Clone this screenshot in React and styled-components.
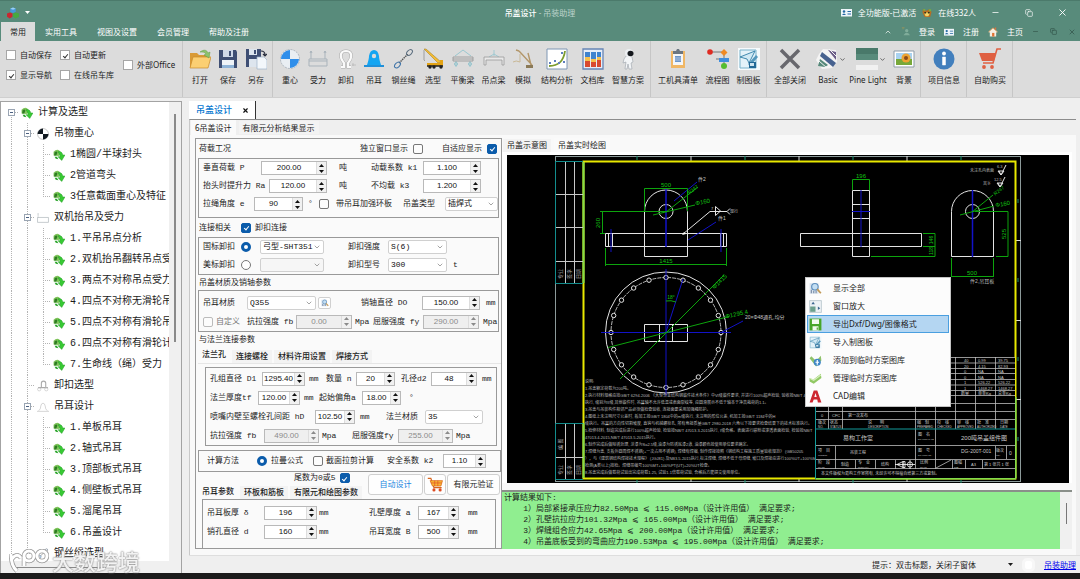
import styled, { createGlobalStyle, css } from "styled-components";
import { ChevronDown, ChevronUp, Copy, Minus, X } from "lucide-react";

const GlobalStyle = createGlobalStyle`
  *, *::before, *::after {
    box-sizing: border-box;
  }

  body {
    margin: 0;
    font-family: "Noto Sans", "Noto Sans CJK SC", sans-serif;
    font-size: 8px;
    line-height: 12px;
    color: #1c1c1c;
    background: #efefef;
  }

  button, input, select {
    margin: 0;
    padding: 0;
    font: inherit;
    color: inherit;
  }

  button {
    border: 0;
    background: none;
  }

  svg {
    display: block;
    flex: none;
  }
`;

/* ---------- window ---------- */

const Window = styled.div`
  display: flex;
  flex-direction: column;
  height: 100vh;
  overflow: hidden;
  border-bottom: 6px solid #1b1b1b;
`;

const TitleBar = styled.header`
  display: grid;
  grid-template-columns: 1fr auto 1fr;
  align-items: center;
  height: 22px;
  padding-top: 2px;
  color: #fff;
  background: #588b7b;
  border-top: 1px solid #4b7a6b;
`;

const TitleLeft = styled.div`
  display: flex;
  align-items: center;
  gap: 6px;
  padding-left: 7px;
`;

const Title = styled.h1`
  margin: 0;
  font-size: 8px;
  font-weight: 500;

  span {
    font-weight: 400;
    color: #bcd3cb;
  }
`;

const TitleRight = styled.div`
  display: flex;
  justify-content: flex-end;
  align-items: center;
  gap: 6px;
`;

const WindowButtons = styled.div`
  display: flex;
  justify-content: space-between;
  align-items: center;
  width: ${(props) => (props.$small ? "48px" : "98px")};
  padding: ${(props) => (props.$small ? "0 4px 0 0" : "0 12px 0 9px")};
  color: ${(props) => (props.$small ? "#2f4f45" : "#fff")};

  button {
    display: grid;
    place-items: center;
  }
`;

const MenuBar = styled.nav`
  display: flex;
  align-items: stretch;
  height: 19px;
  padding-left: 1px;
  color: #fff;
  background: #588b7b;
`;

const MenuTab = styled.button`
  padding: 0 ${(props) => (props.$active ? "9px" : "10px")};
  color: ${(props) => (props.$active ? "#1c1c1c" : "#fff")};
  background: ${(props) => (props.$active ? "#dcdcdc" : "none")};
`;

const MenuRight = styled.div`
  display: flex;
  align-items: center;
  gap: 9px;
  margin-left: auto;
`;

/* ---------- ribbon ---------- */

const Ribbon = styled.div`
  display: flex;
  height: 57px;
  background: #dcdcdc;
  border-bottom: 1px solid #cfcfcf;
`;

const RibbonOptions = styled.div`
  display: grid;
  grid-template-columns: 54px 63px 1fr;
  grid-template-rows: 20px 20px;
  align-content: start;
  align-items: center;
  width: 183px;
  padding: 4px 0 0 6px;
  border-right: 1px solid #c6c6c6;

  label:last-child {
    grid-column: 3;
    grid-row: 1 / 3;
  }
`;

const RibbonGroup = styled.div`
  display: flex;
  padding: 0 2px 0 3px;
  border-right: 1px solid #c6c6c6;
`;

const toolWidths = { s: "28px", m: "31px", p: "36px", l: "40px", w: "44px", x: "48px" };

const Tool = styled.button`
  display: flex;
  flex-direction: column;
  align-items: center;
  gap: 4px;
  width: ${(props) => toolWidths[props.$size]};
  padding-top: 7px;
  white-space: nowrap;
`;

const ToolIcon = styled.span`
  display: flex;
  align-items: center;
  gap: 1px;
  height: 22px;
  margin-left: ${(props) => (props.$arrow ? "6px" : "0")};
`;

/* ---------- controls ---------- */

const CheckLabel = styled.label`
  display: flex;
  align-items: center;
  gap: ${(props) => props.$gap || "4px"};
  white-space: nowrap;
  color: ${(props) => (props.$muted ? "#777" : "inherit")};
`;

const Check = styled.input.attrs({ type: "checkbox" })`
  appearance: none;
  display: grid;
  place-items: center;
  flex: none;
  width: 10px;
  height: 10px;
  border: 1px solid #777;
  border-radius: 2px;
  background: #fcfcfc;

  &:checked {
    border-color: #0b5cab;
    background: #0b5cab;
  }

  &:checked::before {
    content: "";
    width: 3px;
    height: 5px;
    border: solid #fff;
    border-width: 0 1px 1px 0;
    transform: rotate(40deg);
  }

  &:disabled {
    border-color: #bbb;
  }

  ${(props) =>
    props.$flat &&
    css`
      border-color: #a6a6a6;
      border-radius: 0;
      background: #fff;

      &:checked {
        border-color: #a6a6a6;
        background: #fff;
      }

      &:checked::before {
        border-color: #333;
      }
    `}
`;

const Radio = styled.input.attrs({ type: "radio" })`
  appearance: none;
  width: 10px;
  height: 10px;
  border: 1px solid #777;
  border-radius: 50%;
  background: #fff;

  &:checked {
    border: 3px solid #0b5cab;
  }
`;

const SpinWrapper = styled.span`
  display: flex;
  width: ${(props) => props.$width}px;
  height: 14px;
  border: 1px solid #b9b9b9;
  background: ${(props) => (props.$disabled ? "#efefef" : "#fff")};
  color: ${(props) => (props.$disabled ? "#8b8b8b" : "#111")};
`;

const SpinInput = styled.input`
  flex: 1;
  min-width: 0;
  border: 0;
  outline: 0;
  background: none;
  font-family: "Liberation Sans", sans-serif;
  font-size: 8px;
  text-align: center;
`;

const SpinArrows = styled.span`
  display: grid;
  grid-template-rows: 1fr 1fr;
  width: 10px;
  background: #f1f1f1;
  border-left: 1px solid #ddd;

  button {
    display: grid;
    place-items: center;
    line-height: 0;
  }
`;

const SelectWrapper = styled.span`
  display: grid;
  grid-template-columns: 1fr 10px;
  align-items: center;
  width: ${(props) => props.$width}px;
  height: 14px;
  border: 1px solid #d0d0d0;
  border-radius: 2px;
  background: ${(props) => (props.$disabled ? "#f6f6f6" : "#fff")};
  color: #111;

  select {
    grid-area: 1 / 1 / 2 / 3;
    width: 100%;
    height: 12px;
    padding-left: 2px;
    border: 0;
    outline: 0;
    appearance: none;
    background: none;
    line-height: 12px;
  }

  svg {
    grid-area: 1 / 2;
    color: #777;
    pointer-events: none;
  }
`;

/* ---------- body ---------- */

const Body = styled.div`
  display: flex;
  flex: 1;
  min-height: 0;
  padding-top: 3px;
`;

const Sidebar = styled.aside`
  display: grid;
  grid-template-columns: 1fr 12px;
  grid-template-rows: minmax(0, 1fr) 12px;
  flex: none;
  width: 182px;
  border: 1px solid #a3a3a3;
  border-bottom: 0;
  background: #f0f0f0;
`;

const Tree = styled.ul`
  margin: 0;
  padding: 0 0 0 2px;
  overflow: hidden;
  list-style: none;
  background: #fff;
  font-family: "Liberation Mono", "Noto Sans CJK SC", monospace;
  font-size: 10px;
`;

const TreeRow = styled.li`
  display: flex;
  align-items: center;
  height: 21px;
  white-space: nowrap;
`;

const dots = "#b4b4b4 0 1px, transparent 1px 2px";

const Branch = styled.span`
  display: grid;
  place-items: center;
  flex: none;
  width: 16px;
  height: 21px;
  background-repeat: no-repeat;
  background-image: repeating-linear-gradient(${dots}),
    repeating-linear-gradient(90deg, ${dots});
  background-position: 8px ${(props) => (props.$from ? "11px" : "0")}, 8px 10px;
  background-size: 1px ${(props) => (props.$last || props.$from ? "11px" : "100%")},
    ${(props) => (props.$stub ? "8px 1px" : "0 0")};
`;

const Expander = styled.button`
  width: 7px;
  height: 7px;
  border: 1px solid #9aa5b3;
  background: linear-gradient(#4a5f80, #4a5f80) center / 3px 1px no-repeat #fff;
`;

const TreeIcon = styled.span`
  display: grid;
  place-items: center;
  flex: none;
  width: 16px;
  margin-right: 3px;
`;

const Scroll = styled.div`
  display: flex;
  justify-content: center;
  padding: 12px 0;

  &::before {
    content: "";
    width: 2px;
    height: 228px;
    max-height: 100%;
    background: #8a8a8a;
  }
`;

const HScroll = styled.div`
  display: flex;
  align-items: center;
  padding-left: 13px;

  &::before {
    content: "";
    width: 92px;
    height: 1px;
    background: #8a8a8a;
  }
`;

const Main = styled.main`
  display: flex;
  flex-direction: column;
  flex: 1;
  min-width: 0;
  padding-left: 7px;
`;

const DocTabs = styled.div`
  display: flex;
  height: 18px;
`;

const DocTab = styled.div`
  display: flex;
  align-items: center;
  gap: 10px;
  padding: 0 6px 0 7px;
  border-right: 1px solid #333;
  background: #fff;
  color: #0a78d0;
  font-size: 9px;
  font-weight: 500;

  button {
    color: #111;
  }
`;

const Panel = styled.section`
  display: flex;
  flex-direction: column;
  flex: 1;
  min-height: 0;
  margin-right: 4px;
  border-top: 1px solid #8c8c8c;
  border-left: 1px solid #c9c9c9;
  background: #f9f9f9;
`;

const SubTabs = styled.div`
  display: flex;
  align-items: center;
  gap: 3px;
  height: 15px;
  padding-left: 1px;
  background: #efefef;
`;

const SubTab = styled.button`
  height: ${(props) => (props.$active ? "100%" : "13px")};
  padding: 0 4px;
  background: ${(props) => (props.$active ? "#fafafa" : "#f3f3f3")};
  white-space: nowrap;
  font-weight: ${(props) => (props.$bold ? "500" : "400")};
`;

const Work = styled.div`
  display: flex;
  flex: 1;
  min-height: 0;
  padding: 3px 4px 6px 5px;
`;

/* ---------- form ---------- */

const Form = styled.form`
  flex: none;
  width: 307px;
  padding-left: 2px;
  overflow: hidden;
  border: 1px solid #999;
  background: #fafafa;
  font-family: "Liberation Mono", "Noto Sans CJK SC", monospace;
`;

const Legend = styled.div`
  display: flex;
  align-items: center;
  gap: ${(props) => props.$gap || "10px"};
  height: ${(props) => (props.$short ? "15px" : "19px")};
  padding: 0 4px 0 1px;
`;

const Spacer = styled.span`
  flex: 1;
`;

const Group = styled.div`
  margin: ${(props) => props.$margin || "0 2px 0 0"};
  padding: ${(props) => props.$pad || "0"};
  border: 1px solid #999;
`;

const Row = styled.div`
  display: grid;
  grid-template-columns: ${(props) => props.$cols};
  align-items: center;
  justify-items: start;
  height: ${(props) => props.$height || "19px"};
  padding-left: 4px;
  white-space: nowrap;
`;

const FormTabs = styled.div`
  display: flex;
  align-items: flex-end;
  gap: 2px;
  height: 16px;
`;

const TabPage = styled.div`
  padding: 3px 4px 4px 7px;
  border-top: 1px solid #e6e6e6;
`;

const ActionBar = styled.div`
  display: flex;
  align-items: flex-start;
  height: 27px;
`;

const ActionTabs = styled.div`
  display: flex;
  flex-direction: column;
  flex: 1;
  justify-content: flex-end;
  height: 27px;
`;

const ActionButton = styled.button`
  display: grid;
  place-items: center;
  height: 21px;
  width: ${(props) => props.$width}px;
  margin: 2px 1px 0 0;
  border: 1px solid #d0d0d0;
  border-radius: 3px;
  background: #fefefe;
  color: ${(props) => (props.$primary ? "#1b86e0" : "#1c1c1c")};
`;

const SearchButton = styled.button`
  display: grid;
  place-items: center;
  width: 13px;
  height: 12px;
  border: 1px solid #d0d0d0;
  border-radius: 2px;
  background: #fff;
`;

/* ---------- viewer ---------- */

const Viewer = styled.div`
  display: flex;
  flex-direction: column;
  flex: 1;
  min-width: 0;
`;

const ViewerTabs = styled(SubTabs)`
  height: 14px;
  background: none;
`;

const CanvasFrame = styled.div`
  position: relative;
  flex: 1;
  min-height: 0;
  padding: 3px 3px 0 5px;
  background: #fff;
`;

const CadSvg = styled.svg`
  width: 100%;
  height: 100%;
  background: #000;
  font-family: "Liberation Sans", "Noto Sans CJK SC", sans-serif;
`;

const ContextMenu = styled.ul`
  position: absolute;
  left: 303px;
  top: 125px;
  width: 146px;
  margin: 0;
  padding: 1px;
  list-style: none;
  border: 1px solid #c4c4c4;
  background: #fcfcfc;
`;

const MenuItem = styled.button`
  display: grid;
  grid-template-columns: 24px 1fr;
  align-items: center;
  width: 100%;
  height: 18px;
  padding-left: 1px;
  text-align: left;
  border: 1px solid ${(props) => (props.$active ? "#4a9fe0" : "transparent")};
  background: ${(props) => (props.$active ? "#b4d6f2" : "none")};
`;

const Results = styled.div`
  display: flex;
  height: 59px;
  margin-top: 7px;
  border-top: 2px solid #8a8f8a;
  background: #90ee90;
`;

const ResultText = styled.pre`
  flex: 1;
  margin: 0;
  padding-left: 2px;
  overflow: hidden;
  font-family: "Liberation Mono", "Noto Sans CJK SC", monospace;
  font-size: 8px;
  line-height: 11px;
`;

const ResultScroll = styled.div`
  display: flex;
  justify-content: center;
  width: 12px;
  padding-top: 11px;
  background: #f0f0f0;

  &::before {
    content: "";
    width: 1px;
    height: 21px;
    background: #777;
  }
`;

const StatusBar = styled.footer`
  display: flex;
  justify-content: flex-end;
  align-items: center;
  height: 18px;
  padding-right: 4px;
  border-top: 1px solid #dedede;

  span {
    margin-right: 32px;
  }

  a {
    margin-left: 9px;
    color: #0000ee;
  }
`;

const StatusIcon = styled.i`
  width: 13px;
  height: 14px;
  margin-left: 9px;
  border: 3px solid #f7f7f7;
  border-radius: 5px;
  background: #fff;
`;

const Watermark = styled.div`
  position: fixed;
  left: 9px;
  bottom: 6px;
  display: flex;
  align-items: center;
  gap: 3px;
  color: rgba(255, 255, 255, 0.9);
  font-size: 22px;
  font-weight: 500;
  line-height: 24px;
  text-shadow: 0 0 2px #777, 0 0 1px #999;
  pointer-events: none;
`;

/* ---------- icons ---------- */

const Svg = ({ size = 22, children, ...rest }) => (
  <svg width={size} height={size} viewBox="0 0 22 22" fill="none" {...rest}>
    {children}
  </svg>
);

const icons = {
  open: (
    <>
      <path d="M1 5h7l2 2h9v12H1z" fill="#d99a36" />
      <path d="M4 9h18l-3 11H1z" fill="#fbcf72" stroke="#c98a2a" strokeWidth=".7" />
      <path d="M11 4c4-3 7-2 8 1l2-1-1 6-5-3 2-1c-1-2-3-2-6-2z" fill="#8cc26b" stroke="#5f9a45" strokeWidth=".5" />
    </>
  ),
  save: (
    <>
      <path d="M2 2h17l1 2v16H2z" fill="#3f4f74" />
      <path d="M6 2h10v7H6z" fill="#cfd9e8" />
      <path d="M12 3h2v5h-2z" fill="#3f4f74" />
      <path d="M5 12h12v8H5z" fill="#eef3f8" />
      <path d="M5 17h12v3H5z" fill="#8fb4d8" />
    </>
  ),
  saveAs: (
    <>
      <path d="M1 1h15v18H1z" fill="#3f4f74" />
      <path d="M4 1h8v6H4zM4 11h9v8H4z" fill="#dde5ee" />
      <path d="M9 2h2v4H9z" fill="#3f4f74" />
      <path d="M16 3q4 0 4 4m-2-1 2 2 2-2" stroke="#2a2f3f" strokeWidth="1.2" />
      <path d="M12 9h7l3 3v9H12z" fill="#f3f7fb" stroke="#9fb2c9" strokeWidth=".7" />
    </>
  ),
  gravity: (
    <>
      <circle cx="11" cy="11" r="9.5" fill="#e9eef3" stroke="#8d99a6" strokeWidth=".6" strokeDasharray="2 1" />
      <path d="M11 11V2a9 9 0 0 0-9 9zM11 11v9a9 9 0 0 0 9-9z" fill="#2f8eea" />
    </>
  ),
  force: (
    <path d="M2 11h18v7H2zM4 11V3M18 11V3m-14 0-1 2m1-2 1 2m13-2-1 2m1-2 1 2M2 13h18" stroke="#a9b3bb" strokeWidth="1" />
  ),
  shackle: (
    <>
      <path d="M6 19h3v-4Q5 10 6 6q1-3 5-3t5 3q1 4-3 9v4h3" stroke="#a8a8a8" strokeWidth="3.200" />
      <path d="M6 19h3v-4Q5 10 6 6q1-3 5-3t5 3q1 4-3 9v4h3" stroke="#fafafa" strokeWidth="2.200" />
      <path d="M17 17h4M18 15v3" stroke="#b0b0b0" strokeWidth=".6" />
    </>
  ),
  lug: (
    <>
      <path d="M1 17h3Q6 11 6 8q1-6 5-6t5 6q0 3 2 9h3v2H1z" fill="#14a5f2" />
      <circle cx="11" cy="8" r="2.2" fill="#dcdcdc" />
      <path d="M1 18h20" stroke="#2c7cc0" />
    </>
  ),
  rope: (
    <>
      <path d="m6 15 9-9" stroke="#555" strokeWidth="1.4" strokeDasharray="1.5 .7" />
      <ellipse cx="16.500" cy="4.500" rx="3.500" ry="2.200" transform="rotate(-45 16.500 4.500)" stroke="#5d6f80" />
      <ellipse cx="4.500" cy="17" rx="3.500" ry="2.200" transform="rotate(-45 4.500 17)" stroke="#3d73a8" />
    </>
  ),
  crane: (
    <>
      <path d="M2 1 16 15l3-1L4 1z" fill="#f5bd33" stroke="#9a7418" strokeWidth=".5" />
      <path d="M2 2v10l1 1" stroke="#777" strokeWidth=".6" />
      <path d="M5 15h13v-3h3v6H5z" fill="#e3a314" />
      <path d="M5 18h16" stroke="#222" strokeWidth="1.5" />
      <circle cx="8" cy="19" r="1.700" fill="#222" />
      <circle cx="12" cy="19" r="1.700" fill="#222" />
      <circle cx="19" cy="19" r="1.700" fill="#222" />
    </>
  ),
  balance: (
    <>
      <path d="M3 8 11 2l8 6M4 13v6M18 13v6" stroke="#92c4cd" strokeWidth=".9" />
      <path d="M1 9h20v4H1zM1 11h20" stroke="#999" strokeWidth=".9" />
      <circle cx="4" cy="16" r="1.500" stroke="#92c4cd" />
      <circle cx="18" cy="16" r="1.500" stroke="#92c4cd" />
    </>
  ),
  beam: (
    <>
      <path d="M11 8V2M6 9l5-3 5 3" stroke="#9ac7d0" strokeWidth=".9" />
      <path d="M1 9h20v8h-2v-5H3v5H1z" fill="#e8e8e8" stroke="#999" strokeWidth=".8" />
    </>
  ),
  simulate: (
    <>
      <path d="M7 3 20 17M16 5l3 12M7 3 4 2" stroke="#b2966a" strokeWidth="1.4" />
      <path d="M14 17h7v3h-7z" fill="#8b7a58" />
      <path d="M1 14q3-2 7 0M8 6v8" stroke="#c9b896" />
    </>
  ),
  chart: (
    <>
      <path d="M1 1h20v20H1z" fill="#fff" stroke="#7f97b5" />
      <path d="M3 18q14 0 16-15" stroke="#7c9c2e" strokeWidth="1.800" />
      <path d="M3 14h2v2H3zM8 12h2v2H8zM12 14h2v2h-2zM15 4h2v2h-2zM17 13h2v2h-2z" fill="#5e7ebf" />
    </>
  ),
  docs: (
    <>
      <path d="M1 1h20v20H1z" fill="#e6edf8" stroke="#6685b5" strokeWidth="1.300" />
      <path d="M3 4h5v7H3zM9 4h5v7H9zM15 4h4v7h-4z" fill="#3f83cf" />
      <path d="M3 9h5v5H3zM9 11h5v4H9zM15 9h4v5h-4z" fill="#f6c04d" />
      <path d="M3 13h5v6H3zM9 14h5v5H9zM15 12h4v7h-4z" fill="#d84a30" />
    </>
  ),
  robot: (
    <>
      <path d="M9 8q4-2 6 1l1 5-2 1 1 6h-3l-1-5-1 5H8l1-7-3 1 1-4z" fill="#f3f5f7" stroke="#9aa1aa" strokeWidth=".6" />
      <circle cx="12" cy="5" r="4" fill="#eceff2" />
      <ellipse cx="13.500" cy="5.500" rx="3" ry="2.800" fill="#15181d" />
    </>
  ),
  clipboard: (
    <>
      <path d="M4 3h14v17H4z" fill="#f0b765" />
      <path d="M6 5h10v12H6z" fill="#f4f6f8" />
      <path d="M6 3h3l1-2h2l1 2h3v3H6z" fill="#6b7681" />
      <path d="M8 8h6v6H8z" fill="#6d96c8" />
      <path d="M8 10h6M8 12h6" stroke="#c9d9ec" strokeWidth=".7" />
    </>
  ),
  flow: (
    <>
      <path d="M5 4h12v15M17 11H9" stroke="#777" />
      <circle cx="3" cy="4" r="2.800" fill="#df2b22" />
      <path d="m17 1 3.500 3.500L17 8l-3.500-3.500z" fill="#f08a24" />
      <path d="M12 10h10v4H12z" fill="#3e8ede" />
      <circle cx="17" cy="18" r="3" fill="#54bd31" />
    </>
  ),
  board: (
    <>
      <path d="M0 0h22v22H0z" fill="#f6fafc" />
      <path d="M2 2h16v18H2z" fill="#e4f2f9" stroke="#79b2cb" />
      <path d="m2 9 15-6-6 12-2-4z" fill="#d0e9f5" stroke="#317ea6" strokeWidth=".9" />
      <path d="m10 16 8-9 2 2-8 9z" fill="#5698bc" />
      <path d="M11 14h7v6h-7z" fill="#246996" />
      <path d="M12 15h4v3h-4z" fill="#cfe5f0" />
    </>
  ),
  closeAll: <path d="m2 2 18 18M20 2 2 20" stroke="#67676d" strokeWidth="3.500" />,
  basic: (
    <>
      <path d="m0 12 3-6 4-5 13 1 1 12-5 6-10 1z" fill="#f4f4f4" />
      <path d="m6 4 14 11-3 4L4 8z" fill="#47628f" />
      <path d="m12 2 8 2v8z" fill="#695b86" />
      <path d="m2 18 2-7 8 6-3 2z" fill="#56897a" />
      <path d="m3 13 8 7M13 1l8 8" stroke="#f4f4f4" />
    </>
  ),
  pine: (
    <>
      <path d="M0 0h22v6H0z" fill="#49796a" />
      <path d="M0 6h22v6H0z" fill="#588b7b" />
      <path d="M0 12h22v5H0z" fill="#dcdcdc" />
      <path d="M0 17h22v5H0z" fill="#f1f1f1" />
    </>
  ),
  photo: (
    <>
      <path d="M1 3h20v16H1z" fill="#fff" stroke="#8d9ca8" />
      <path d="M3 5h16v6H3z" fill="#a8d2f0" />
      <path d="M3 11h16v6H3z" fill="#77a83a" />
      <circle cx="13" cy="10" r="4.500" fill="#eda331" />
      <circle cx="13" cy="10" r="2" fill="#8a4a17" />
    </>
  ),
  info: (
    <>
      <circle cx="11" cy="11" r="10.500" fill="#427fbd" />
      <circle cx="11" cy="5.500" r="1.900" fill="#fff" />
      <path d="M9.500 9h3v8h-3z" fill="#fff" stroke="#fff" strokeWidth=".5" />
    </>
  ),
  cart: (
    <>
      <path d="M22 1h-4l-4 14H4" stroke="#df6042" strokeWidth="1.600" />
      <path d="M0 5h17l-2 8H3z" fill="#df6042" />
      <circle cx="5" cy="19" r="1.900" fill="#df6042" />
      <circle cx="13" cy="19" r="1.900" fill="#df6042" />
    </>
  ),
  goldCart: (
    <>
      <path d="M1 3h4l4 12h10" stroke="#d8631b" strokeWidth="1.500" />
      <path d="M4 6h16l-2 7H7z" fill="#f8b834" stroke="#db6b1b" />
      <path d="M10 6v7m4-7v7M5 9h14" stroke="#e2572a" />
      <circle cx="9" cy="18" r="2" fill="#dd4c22" />
      <circle cx="17" cy="18" r="2" fill="#dd4c22" />
    </>
  ),
  cubes: (
    <>
      <path d="m11 1 5 2v6l-5 2-5-2V3z" fill="#4698de" />
      <path d="m5 10 5 2v6l-5 3-5-3v-6z" fill="#c72830" />
      <path d="m16 10 6 2v6l-6 3-5-3v-6z" fill="#46a942" />
      <path d="m6 3 5 2 5-2-5-2z" fill="#9bd0f2" />
    </>
  ),
  card: (
    <>
      <path d="M0 4h22v15H0z" fill="#eef5fa" />
      <circle cx="6" cy="9" r="2.500" fill="#2468a3" />
      <path d="M2 16q4-6 8 0zM13 8h7v2h-7zM13 13h7v2h-7z" fill="#2468a3" />
    </>
  ),
  lion: (
    <>
      <path d="m2 2 7 4 8-4 4 7-3 11H6L1 10z" fill="#b76c22" />
      <path d="M4 10h14l-4 8H8z" fill="#f2d466" />
      <path d="M5 9h4v3H5zM13 9h4v3h-4z" fill="#353014" />
      <path d="M3 2h4v4H3zM15 3h5v4h-5z" fill="#77ad45" />
    </>
  ),
  user: (
    <g opacity=".6">
      <path d="M2 2h7M5 0v6" stroke="#b39c51" strokeWidth="2" />
      <circle cx="14" cy="9" r="4" fill="#9ac3af" />
      <path d="M6 20q8-12 16 0z" fill="#9ac3af" />
    </g>
  ),
  house: (
    <>
      <path d="m1 11 10-9 10 9-3 1v9H4v-9z" fill="#f6efe3" />
      <path d="m1 11 10-9 10 9" stroke="#e1a05d" strokeWidth="2" />
      <path d="M9 13h5v8H9z" fill="#df7233" />
      <path d="M15 1h3v5h-3z" fill="#da6e3d" />
    </>
  ),
  leaf: (
    <>
      <path d="M1 5q6-6 11-2l3 6-5 4-9-1z" fill="#7fc45a" />
      <path d="M3 6q4-3 5 1L6 12H2z" fill="#2f7c24" />
      <path d="M9 5q7-2 9 6h4l-6 10-7-7h4q0-5-4-9z" fill="#38c934" stroke="#259728" strokeWidth=".8" />
      <path d="M3 14h4l3 5-5-1z" fill="#2da52d" />
    </>
  ),
  centre: (
    <>
      <circle cx="11" cy="11" r="10" fill="#fff" stroke="#999" />
      <path d="M11 11V1A10 10 0 0 0 1 11zM11 11v10a10 10 0 0 0 10-10z" fill="#101820" />
    </>
  ),
  faint: <path d="M1 10h20v9H1zM2 2v5M2 10V8" stroke="#9aa3a8" />,
  faintShackle: (
    <>
      <path d="M8 13V6q0-4 4-4t4 4v7M2 14h18" stroke="#aaa" strokeWidth="2" />
      <circle cx="4" cy="17" r="3" stroke="#bbb" />
      <circle cx="17" cy="17" r="3" stroke="#bbb" />
    </>
  ),
  faintLug: <path d="M0 19h22M3 18Q7 15 7 9q1-5 4-5t4 5q0 6 4 9" stroke="#b5b5b5" />,
  zoomAll: (
    <>
      <path d="M1 2h15v18H1z" fill="#dbe4ee" />
      <path d="M3 13h2v6H3zM7 15h2v4H7zM11 14h2v5h-2z" fill="#7d91ab" />
      <circle cx="10" cy="8" r="5.500" fill="#c4dff3" stroke="#5f8fbd" strokeWidth="2" />
      <path d="m14 12 6 7" stroke="#c29956" strokeWidth="3" />
    </>
  ),
  zoomWin: (
    <>
      <path d="M1 1h20v20H1z" fill="#edf2f5" stroke="#9fb2bb" />
      <path d="M2 11h9v9H2z" fill="#6ca08e" />
      <path d="m7 3 3 4H4zM15 11l4 3-4 3z" fill="#3b668e" />
    </>
  ),
  disk: (
    <>
      <path d="M1 1h20v20H1z" fill="#48a629" />
      <path d="M5 2h12v8H5zM6 14h10v7H6z" fill="#f2faef" />
      <path d="M13 16h2v4h-2z" fill="#48a629" />
    </>
  ),
  addLib: (
    <>
      <path d="m1 7 3-3 8 8 8-9 1 8-9 10z" fill="#8fc26a" />
      <circle cx="14" cy="14" r="6" fill="#3f86c7" />
      <path d="M14 10v8M11 14h6" stroke="#fff" strokeWidth="2" />
    </>
  ),
  manageLib: (
    <>
      <path d="m1 10 6 3L20 3l1 7L8 20 1 16z" fill="#91c864" />
      <path d="m2 11 6 3L20 5" stroke="#d6efbd" strokeWidth="2" />
    </>
  ),
  cad: <path d="M1 21 8 1h6l7 20h-6l-1-5H8l-2 5zM9 12h4l-2-7z" fill="#cd2730" fillRule="evenodd" />,
};

const Icon = ({ name, size }) => <Svg size={size}>{icons[name]}</Svg>;

const Caret = ({ up }) => (
  <svg width="5" height="3" viewBox="0 0 5 3">
    <path d={up ? "M0 3 2.500 0 5 3z" : "M0 0h5L2.500 3z"} fill="currentColor" />
  </svg>
);

/* ---------- data ---------- */

const toolGroups = [
  [["open", "打开", "s"], ["save", "保存", "s"], ["saveAs", "另存", "s"]],
  [
    ["gravity", "重心", "s"],
    ["force", "受力", "s"],
    ["shackle", "卸扣", "s"],
    ["lug", "吊耳", "s"],
    ["rope", "钢丝绳", "m"],
    ["crane", "选型", "s"],
    ["balance", "平衡梁", "m"],
    ["beam", "吊点梁", "m"],
    ["simulate", "模拟", "s"],
    ["chart", "结构分析", "l"],
    ["docs", "文档库", "m"],
    ["robot", "智慧方案", "l"],
  ],
  [["clipboard", "工机具清单", "x"], ["flow", "流程图", "m"], ["board", "制图板", "m"]],
  [
    ["closeAll", "全部关闭", "l"],
    ["basic", "Basic", "p", true],
    ["pine", "Pine Light", "w", true],
    ["photo", "背景", "s"],
  ],
  [["info", "项目信息", "l"]],
  [["cart", "自助购买", "l"]],
];

const tree = [
  { text: "计算及选型", level: 0, icon: "leaf", open: true },
  { text: "吊物重心", level: 1, icon: "centre", open: true },
  { text: "1椭圆/半球封头", level: 2, icon: "leaf" },
  { text: "2管道弯头", level: 2, icon: "leaf" },
  { text: "3任意截面重心及特征", level: 2, icon: "leaf", last: true },
  { text: "双机抬吊及受力", level: 1, icon: "faint", open: true },
  { text: "1.平吊吊点分析", level: 2, icon: "leaf" },
  { text: "2.双机抬吊翻转吊点受力", level: 2, icon: "leaf" },
  { text: "3.两点不对称吊点受力", level: 2, icon: "leaf" },
  { text: "4.四点不对称无滑轮吊装", level: 2, icon: "leaf" },
  { text: "5.四点不对称有滑轮吊装", level: 2, icon: "leaf" },
  { text: "6.四点不对称有滑轮计算", level: 2, icon: "leaf" },
  { text: "7.生命线（绳）受力", level: 2, icon: "leaf", last: true },
  { text: "卸扣选型", level: 1, icon: "faintShackle" },
  { text: "吊耳设计", level: 1, icon: "faintLug", open: true },
  { text: "1.单板吊耳", level: 2, icon: "leaf" },
  { text: "2.轴式吊耳", level: 2, icon: "leaf" },
  { text: "3.顶部板式吊耳", level: 2, icon: "leaf" },
  { text: "4.侧壁板式吊耳", level: 2, icon: "leaf" },
  { text: "5.溜尾吊耳", level: 2, icon: "leaf" },
  { text: "6.吊盖设计", level: 2, icon: "leaf", last: true },
  { text: "钢丝绳选型", level: 1, icon: "rope" },
];

const menuItems = [
  ["zoomAll", "显示全部"],
  ["zoomWin", "窗口放大"],
  ["disk", "导出Dxf/Dwg/图像格式"],
  ["board", "导入制图板"],
  ["addLib", "添加到临时方案图库"],
  ["manageLib", "管理临时方案图库"],
  ["cad", "CAD编辑"],
];

const notes = [
  "说明:",
  "1.吊盖额定荷载为200吨。",
  "2.执行材料规格应按GB/T 6294-2006 《大型合金结构钢锻件技术条件》中VI级锻件要求, 并进行100%超声检验, 验收按NB/T 47013.3-2015",
  "执行, 级别为II级,其他锻件时, 吊耳轴不允许低温或表面裂纹等, 应圆滑展示不低于轴本于净高裁荷的1.1。",
  "3.吊盖与吊装构件相邻产品必须做检查验收, 连接面要采用加强绳防护。",
  "4.图纸上未注明尺寸公差时, 板加工按GB/T 1804中的m级执行, 未注明的形位公差, 机加工按GB/T 1184中的H",
  "级执行。吊耳的方向性切割坡度, 直钩与机械螺栓孔, 所有角接质量GB/T 2980-2018 六角以下按要求检查结果下的技术标准执行。",
  "5.检修材料, 制造完成后进行100%超声检验, 检验按NB/T 47013.3-2015执行, I级合格。表面进行磁粉或渗透表面检验, 检验按NB/T",
  "47013.4-2015,NB/T 47013.5-2015执行。",
  "6.制作完成后做除锈处理, 涂漆为Sa2.5级,油漆为防锈底漆2道, 油漆颜色按使用单位要求确定。",
  "7.焊缝为盖, 支板外圆周焊不锈钢(+一次占用不锈钢), 焊缝有焊编, 制作焊接按照《钢结构工程施工质量验收规范》 (GB50205",
  "），与《建筑钢结构焊接技术规程》 (JGJ81) 及NB3.5-2015执行,标注焊缝, 焊缝不低于母焊缝, 坡口及焊接应进行100%UT+100%MT,I,MT",
  "检测(A类以上)按检。焊缝带编号100%MT+100%PT(UT)+20%UT检查。",
  "8.吊盖完成后做载荷试验出完成荷载1.25, 试验1.1倍载荷试验, 合格后方能提交使用单位。",
];

/* ---------- components ---------- */

function Spin({ id, value, width, disabled }) {
  return (
    <SpinWrapper $width={width} $disabled={disabled}>
      <SpinInput id={id} defaultValue={value} disabled={disabled} />
      <SpinArrows>
        <button type="button" aria-label="增加" disabled={disabled}>
          <Caret up />
        </button>
        <button type="button" aria-label="减少" disabled={disabled}>
          <Caret />
        </button>
      </SpinArrows>
    </SpinWrapper>
  );
}

function Select({ id, value, width, disabled }) {
  return (
    <SelectWrapper $width={width} $disabled={disabled}>
      <select id={id} disabled={disabled}>
        <option>{value}</option>
      </select>
      <ChevronDown size={8} />
    </SelectWrapper>
  );
}

function TreeItem({ item, first }) {
  const { level, open, last } = item;
  const final = item === tree[tree.length - 1];

  return (
    <TreeRow>
      {level > 0 && <Branch />}
      {level > 1 && <Branch />}
      <Branch $stub $from={first} $last={last || final}>
        {open && <Expander aria-label="折叠" />}
      </Branch>
      <TreeIcon>
        <Icon name={item.icon} size={12} />
      </TreeIcon>
      {item.text}
    </TreeRow>
  );
}

function Header() {
  return (
    <>
      <TitleBar>
        <TitleLeft>
          <Icon name="cubes" size={12} />
          <Caret />
        </TitleLeft>
        <Title>
          吊盖设计 <span>- 吊装助理</span>
        </Title>
        <TitleRight>
          <Icon name="card" size={11} />
          全功能版-已激活
          <Icon name="lion" size={10} />
          在线332人
          <WindowButtons>
            <button aria-label="最小化"><Minus size={9} /></button>
            <button aria-label="还原"><Copy size={8} /></button>
            <button aria-label="关闭"><X size={11} /></button>
          </WindowButtons>
        </TitleRight>
      </TitleBar>
      <MenuBar>
        <MenuTab $active>常用</MenuTab>
        <MenuTab>实用工具</MenuTab>
        <MenuTab>视图及设置</MenuTab>
        <MenuTab>会员管理</MenuTab>
        <MenuTab>帮助及注册</MenuTab>
        <MenuRight>
          <ChevronUp size={8} />
          <Icon name="user" size={9} />
          登录
          <Icon name="card" size={10} />
          注册
          <Icon name="house" size={10} />
          主页
          <WindowButtons $small>
            <button aria-label="最小化子窗体"><Minus size={7} /></button>
            <button aria-label="还原子窗体"><Copy size={7} /></button>
            <button aria-label="关闭子窗体"><X size={8} /></button>
          </WindowButtons>
        </MenuRight>
      </MenuBar>
    </>
  );
}

function Toolbar() {
  return (
    <Ribbon>
      <RibbonOptions>
        <CheckLabel><Check $flat />自动保存</CheckLabel>
        <CheckLabel><Check $flat defaultChecked />自动更新</CheckLabel>
        <CheckLabel><Check $flat defaultChecked />显示导航</CheckLabel>
        <CheckLabel><Check $flat />在线吊车库</CheckLabel>
        <CheckLabel><Check $flat />外部Office</CheckLabel>
      </RibbonOptions>
      {toolGroups.map((group, index) => (
        <RibbonGroup key={index}>
          {group.map(([icon, text, size, arrow]) => (
            <Tool key={text} $size={size}>
              <ToolIcon $arrow={arrow}>
                <Icon name={icon} />
                {arrow && <ChevronDown size={7} />}
              </ToolIcon>
              {text}
            </Tool>
          ))}
        </RibbonGroup>
      ))}
    </Ribbon>
  );
}

function DesignForm() {
  return (
    <Form>
      <Legend $gap="19px">
        荷载工况
        <Spacer />
        <CheckLabel $gap="5px">独立窗口显示<Check /></CheckLabel>
        <CheckLabel $gap="5px">自适应显示<Check defaultChecked /></CheckLabel>
      </Legend>
      <Group $pad="0 0 4px">
        <Row $height="18px" $cols="58px 78px 32px 52px 1fr">
          <label htmlFor="load">垂直荷载 P</label>
          <Spin id="load" value="200.00" width={66} />
          <span>吨</span>
          <label htmlFor="k1">动载系数 k1</label>
          <Spin id="k1" value="1.100" width={58} />
        </Row>
        <Row $height="18px" $cols="66px 70px 32px 52px 1fr">
          <label htmlFor="ra">抬头时提升力 Ra</label>
          <Spin id="ra" value="120.00" width={58} />
          <span>吨</span>
          <label htmlFor="k3">不均载 k3</label>
          <Spin id="k3" value="1.200" width={58} />
        </Row>
        <Row $height="18px" $cols="51px 54px 11px 84px 42px 1fr">
          <label htmlFor="angle">拉绳角度 e</label>
          <Spin id="angle" value="90" width={49} />
          <span>°</span>
          <CheckLabel $gap="7px"><Check />带吊耳加强环板</CheckLabel>
          <label htmlFor="type">吊盖类型</label>
          <Select id="type" value="插焊式" width={53} />
        </Row>
      </Group>

      <Legend>
        连接相关
        <CheckLabel><Check defaultChecked />卸扣连接</CheckLabel>
      </Legend>
      <Group>
        <Row $height="18px" $cols="38px 19px 88px 40px 65px 1fr">
          <label htmlFor="gb">国标卸扣</label>
          <Radio id="gb" name="shackle" defaultChecked />
          <Select id="gbType" value="弓型-SHT351" width={64} />
          <label htmlFor="grade">卸扣强度</label>
          <Select id="grade" value="S(6)" width={59} />
        </Row>
        <Row $height="18px" $cols="38px 19px 88px 40px 65px 1fr">
          <label htmlFor="us">美标卸扣</label>
          <Radio id="us" name="shackle" />
          <Select id="usType" value="" width={64} disabled />
          <label htmlFor="model">卸扣型号</label>
          <Select id="model" value="300" width={59} />
          <span>t</span>
        </Row>
      </Group>

      <Legend $short>吊盖材质及销轴参数</Legend>
      <Group $pad="2px 0 0">
        <Row $cols="44px 71px 43px 61px 64px 1fr">
          <label htmlFor="mat">吊耳材质</label>
          <Select id="mat" value="Q355" width={69} />
          <SearchButton type="button" aria-label="查询">
            <Icon name="zoomAll" size={8} />
          </SearchButton>
          <label htmlFor="d0">销轴直径 DO</label>
          <Spin id="d0" value="150.00" width={58} />
          <span>mm</span>
        </Row>
        <Row $cols="44px 49px 59px 18px 50px 60px 1fr">
          <CheckLabel $gap="3px" $muted><Check disabled />自定义</CheckLabel>
          <label htmlFor="fb">抗拉强度 fb</label>
          <Spin id="fb" value="0.00" width={56} disabled />
          <span>Mpa</span>
          <label htmlFor="fy">屈服强度 fy</label>
          <Spin id="fy" value="290.00" width={56} disabled />
          <span>Mpa</span>
        </Row>
      </Group>

      <Legend $short>与法兰连接参数</Legend>
      <FormTabs>
        <SubTab type="button" $active $bold>法兰孔</SubTab>
        <SubTab type="button" $bold>连接螺栓</SubTab>
        <SubTab type="button" $bold>材料许用设置</SubTab>
        <SubTab type="button" $bold>焊接方式</SubTab>
      </FormTabs>
      <TabPage>
        <Group $margin="0" $pad="1px 0 0">
          <Row $cols="52px 47px 17px 30px 45px 30px 51px 1fr">
            <label htmlFor="d1">孔组直径 D1</label>
            <Spin id="d1" value="1295.40" width={43} />
            <span>mm</span>
            <label htmlFor="n">数量 n</label>
            <Spin id="n" value="20" width={39} />
            <label htmlFor="d2">孔径d2</label>
            <Spin id="d2" value="48" width={46} />
            <span>mm</span>
          </Row>
          <Row $cols="48px 46px 15px 43px 47px 1fr">
            <label htmlFor="tf">法兰厚度tf</label>
            <Spin id="tf" value="120.00" width={42} />
            <span>mm</span>
            <label htmlFor="off">起始偏角a</label>
            <Spin id="off" value="18.00" width={39} />
            <span>°</span>
          </Row>
          <Row $cols="105px 45px 26px 39px 1fr">
            <label htmlFor="hd">喷嘴内壁至螺栓孔间距 hD</label>
            <Spin id="hd" value="102.50" width={40} />
            <span>mm</span>
            <label htmlFor="fmat">法兰材质</label>
            <Select id="fmat" value="35" width={58} />
          </Row>
          <Row $cols="54px 58px 30px 46px 58px 1fr">
            <label htmlFor="ffb">抗拉强度 fb</label>
            <Spin id="ffb" value="490.00" width={55} disabled />
            <span>Mpa</span>
            <label htmlFor="ffy">屈服强度fy</label>
            <Spin id="ffy" value="255.00" width={55} disabled />
            <span>Mpa</span>
          </Row>
        </Group>
      </TabPage>

      <Group $margin="0" $pad="0 0 0 4px">
        <Row $height="20px" $cols="50px 56px 74px 56px 1fr">
          <span>计算方法</span>
          <CheckLabel><Radio name="method" defaultChecked />拉曼公式</CheckLabel>
          <CheckLabel $gap="3px"><Check />截面拉剪计算</CheckLabel>
          <label htmlFor="k2">安全系数 k2</label>
          <Spin id="k2" value="1.10" width={43} />
        </Row>
      </Group>
      <ActionBar>
        <ActionTabs>
          <Row $height="12px" $cols="92px 1fr">
            <span />
            <CheckLabel>尾数为0或5<Check defaultChecked /></CheckLabel>
          </Row>
          <FormTabs>
            <SubTab type="button" $active $bold>吊耳参数</SubTab>
            <SubTab type="button" $bold>环板和筋板</SubTab>
            <SubTab type="button" $bold>有限元和绘图参数</SubTab>
          </FormTabs>
        </ActionTabs>
        <ActionButton type="button" $width={55} $primary>自动设计</ActionButton>
        <ActionButton type="button" $width={22} aria-label="购买">
          <Icon name="goldCart" size={17} />
        </ActionButton>
        <ActionButton type="button" $width={53}>有限元验证</ActionButton>
      </ActionBar>
      <Group $margin="0 5px 0 4px" $pad="3px 0 10px">
        <Row $cols="57px 55px 50px 49px 50px 1fr">
          <label htmlFor="thick">吊耳板厚 δ</label>
          <Spin id="thick" value="196" width={53} />
          <span>mm</span>
          <label htmlFor="wall">孔壁厚度 a</label>
          <Spin id="wall" value="167" width={41} />
          <span>mm</span>
        </Row>
        <Row $cols="57px 55px 50px 49px 50px 1fr">
          <label htmlFor="pin">销孔直径 d</label>
          <Spin id="pin" value="160" width={53} />
          <span>mm</span>
          <label htmlFor="lugW">吊耳宽度 B</label>
          <Spin id="lugW" value="500" width={41} />
          <span>mm</span>
        </Row>
      </Group>
    </Form>
  );
}

function Dim({ x, y, rotate = 0, size = 6, children }) {
  return (
    <text
      x={x}
      y={y}
      fill="#12c012"
      fontSize={size}
      textAnchor="middle"
      transform={rotate ? `rotate(${rotate} ${x} ${y})` : undefined}
    >
      {children}
    </text>
  );
}

function Drawing() {
  const bolts = Array.from({ length: 20 }, (_, i) => {
    const a = (i * 18 * Math.PI) / 180;
    return [666 + 55 * Math.sin(a), 332.5 - 55 * Math.cos(a)];
  });

  return (
    <CadSvg viewBox="507 155 562 328" fill="none">
      {/* sheet frame */}
      <g stroke="#8c9a9a" strokeWidth="1">
        <path d="M555 156.500h466M555.500 156v326M1020.500 156v326M555 481.500h466" />
        <path d="M691 156v5M799 156v5M907 156v5M691 479v3M799 479v3M907 479v3M1016 240.500h5M1016 320.500h5M1016 399.500h5" stroke="#ddd" />
        <path d="M637 156v4M745 156v4M853 156v4M961 156v4M637 480v3M745 480v3M853 480v3M961 480v3M1018 199v4M1018 278v4M1018 357v4M1018 437v4" stroke="#178f6c" />
      </g>
      <path d="M583.500 161.500H1015.500V478.500H583.500z" stroke="#e8e800" strokeWidth="2" />
      <path d="M583.500 162V283M583.500 423v55M1015.500 397v81M816 478.500h200" stroke="#83dd4c" strokeWidth="2" />
      <g stroke="#c8c8c8">
        <path d="M565.500 161v122M574.500 161v122M555 194.500h28M555 227.500h28M555 261.500h28M565.500 423v56M574.500 423v56M555 457.500h28" />
        <path d="M583 161.500h-27.500v122H583M583 423.500h-27.500v56H583" stroke="#138d8d" />
      </g>
      <g fill="#aaa" fontSize="5">
        {[["专业", 558], ["签字", 567], ["日期", 576]].map(([t, x]) => (
          <g key={t}>
            <text transform={`translate(${x + 4} 279) rotate(-90)`}>{t}</text>
            <text transform={`translate(${x + 4} 475) rotate(-90)`}>{t}</text>
          </g>
        ))}
        <text transform="translate(562 450) rotate(-90)">编 图</text>
      </g>

      {/* front view */}
      <g stroke="#e4e4e4">
        <path d="M644.500 256.500V211.500a21.500 21.500 0 0 1 43 0v45zM605.500 233.500h121v13h-121zM608.500 234v12M612.500 234v12M720.500 234v12M723.500 234v12" />
        <circle cx="666" cy="211.500" r="7" />
        <path d="M683 234 710 211.500h17l3-3m-3 3 3 3M715.500 206.500v9l5-4.500z" />
      </g>
      <path d="M682 235l4-1-2-2z" fill="#fff" />
      <g stroke="#1212c8">
        <path d="M666 189v58" strokeWidth="1.500" />
        <path d="M611 229v23M721 229v23M674 201l23-19M716 222l-28 18" />
      </g>
      <g stroke="#0da40d">
        <path d="M644.500 211V188.500h43V211M602.500 211.500v22M600 211.500h66M600 233.500h5M605.500 248v18M726.500 248v18M605.500 264.500h121M666 212l32-25M653 215l42-10" />
      </g>
      <Dim x="666" y="187">500</Dim>
      <Dim x="694" y="191" rotate={-40} size={5}>R247</Dim>
      <Dim x="703" y="204" rotate={-12}>Φ160</Dim>
      <Dim x="600" y="223" rotate={-90}>260</Dim>
      <Dim x="666" y="263">1415</Dim>
      <g fill="#c8c8c8" fontSize="5">
        <text x="698" y="181">件2</text>
        <text x="718" y="220">件1</text>
        <text x="730" y="213" fontSize="4">现行</text>
        <text x="711" y="210" fontSize="4">7</text>
      </g>

      {/* side view */}
      <g stroke="#e4e4e4">
        <path d="M800.500 233.500h121v13h-121zM852.500 190.500h17v66h-17zM852.500 204.500h17M852.500 218.500h17" />
      </g>
      <path d="M861 190v57M852 211.500h18" stroke="#1212c8" />
      <path d="M852.500 190V179.500h17V190M923 233.500h12v23M923 246.500h12M871 256.500h64" stroke="#0da40d" />
      <Dim x="861" y="178">196</Dim>
      <Dim x="933" y="240" rotate={-90} size={5}>146</Dim>
      <Dim x="933" y="251" rotate={-90} size={5}>118</Dim>

      {/* lug plate view */}
      <g stroke="#e4e4e4">
        <path d="M951.500 256.500v-45a21 21 0 0 1 42 0v45z" />
        <circle cx="972.500" cy="211.500" r="7" />
        <path d="m999 171 2 4 5-10M998 171h6l-3 4zM998 183l2 4 5-10M997 183h6l-3 4z" />
      </g>
      <path d="M972.500 190v67" stroke="#1212c8" strokeWidth="1.500" />
      <path d="M972 212l21-17M960 215l34-9M975 211.500h33v45h-12M951.500 258v19M993.500 258v19M951.500 276.500h42" stroke="#0da40d" />
      <Dim x="1000" y="192" rotate={-38} size={5}>R247</Dim>
      <Dim x="1003" y="206" rotate={-10}>Φ160</Dim>
      <Dim x="1006" y="234" rotate={-90}>525</Dim>
      <Dim x="972" y="275">500</Dim>
      <g fill="#b8b8b8" fontSize="4">
        <text x="970" y="172">未注孔内表面</text>
        <text x="983" y="185">其余</text>
        <text x="997" y="168">6.3</text>
        <text x="994" y="181">12.5</text>
        <text x="970" y="283" fontSize="5">件2,吊耳板</text>
      </g>

      {/* flange plan */}
      <g stroke="#e4e4e4">
        <circle cx="666" cy="332.500" r="60.500" />
        <circle cx="666" cy="332.500" r="55" strokeDasharray="4 1" strokeWidth=".8" />
        {bolts.map(([x, y], i) => (
          <circle key={i} cx={x} cy={y} r="2.200" fill="#000" />
        ))}
        <path d="M644.500 324.500h43v17h-43zM659.500 324v17M672.500 324v17" />
      </g>
      <path d="M601 332.500h130M666 269v127M666 332l17-53M722 332l21-11" stroke="#1212c8" />
      <path d="M620 379 724 275M608 347.500l121-31M666 301q5-1 10 1" stroke="#0da40d" />
      <Dim x="721" y="283" rotate={-45}>Φ1415</Dim>
      <Dim x="737" y="316" rotate={-12}>Φ1295.4</Dim>
      <Dim x="671" y="299" size={5}>18°</Dim>
      <text x="745" y="319" fill="#c8c8c8" fontSize="5">20×Φ48通孔,均分</text>

      <g fill="#b8b8b8" fontSize="4">
        {notes.map((note, i) => (
          <text key={note} x="585" y={382.5 + i * 7}>{note}</text>
        ))}
      </g>

      {/* title block */}
      <path d="M816 357h199v121H816z" fill="#000" />
      <g stroke="#bdbdbd" strokeWidth=".8">
        <path d="M816 357.500h199M816 363h199M816 368.500h199M816 373.500h199M816 379.500h199M816 385h199M816 390.500h199M816 395.500h199M816 403.500h199M816 411.500h199M816 419.500h199M816 445.500h199M816 459.500h199M816 468.500h199" />
        <path d="M828.500 403v26M842.500 403v26M915.500 396v73M935.500 396v73M955.500 357v72M975.500 357v72M995.500 357v72M835.500 446v23M855.500 460v9M875.500 460v9M895.500 460v9M952.500 460v9M965.500 460v9M982.500 460v9M995.500 446v13M1006.500 446v13M936 468l15-8" />
      </g>
      <path d="M815.500 396v83M816 429h199" stroke="#139a9a" />
      <g stroke="#fff" strokeWidth=".8">
        <path d="m897 464.500 6-3v6zM903 461.500h2v6h-2zM895 464.500h20M910 460v9" />
        <circle cx="910" cy="464.500" r="2.600" />
      </g>
      <g fill="#c8c8c8" fontSize="4">
        {["40 0.99 39.75", "20 4.15 82.93", "0 NA NA", "0 NA NA", "1 526.22 526.22", "1 1468.27 1468.27", "数量 单重Kg 总重Kg"].map(
          (line, i) => {
            const [a, b, c] = line.split(" ");
            return (
              <g key={i}>
                <text x={a === "数量" ? 961 : 964} y={362 + i * 5.5}>{a}</text>
                <text x="978" y={362 + i * 5.5}>{b}</text>
                <text x="998" y={362 + i * 5.5}>{c}</text>
              </g>
            );
          }
        )}
        <text x="821" y="417">0</text>
        <text x="832" y="417">CFC</text>
        <text x="848" y="417">第一次发布</text>
        {[["版次", "NO.", 818], ["状态", "STATUS", 830], ["说　　明", "DESCRIPTION", 868], ["编　制", "PREPARED", 917], ["校　核", "CHECKED", 937], ["审　核", "APPROVED", 957], ["批　准", "AUTHORIZED", 977], ["日期", "DATE", 1000]].map(
          ([t, en, x]) => (
            <g key={t}>
              <text x={x} y="424">{t}</text>
              <text x={x} y="428" fontSize="3">{en}</text>
            </g>
          )
        )}
        {[["图　名", "DRAWING NAME", 918, 436], ["图　号", "DRAWING NO.", 918, 452], ["项　目", "PROJECT", 818, 452], ["阶　段", "STAGE", 818, 464], ["专　业", "SPECIALTY", 858, 464], ["比例", "SCALE", 920, 464], ["图幅", "SIZE", 954, 464], ["版次", "REV.", 996, 452]].map(
          ([t, en, x, y]) => (
            <g key={t + y}>
              <text x={x} y={y}>{t}</text>
              <text x={x} y={y + 4} fontSize="2">{en}</text>
            </g>
          )
        )}
        <text x="843" y="440" fontSize="6">易构工作室</text>
        <text x="961" y="440" fontSize="6">200吨吊盖组件图</text>
        <text x="850" y="454">吊装工程</text>
        <text x="961" y="453" fontSize="5">DG-200T-001</text>
        <text x="1009" y="455" fontSize="5">0</text>
        <text x="841" y="466">制造</text>
        <text x="881" y="466">结构</text>
        <text x="971" y="466">A3</text>
        <text x="984" y="466">第 1 张共 1 张</text>
        <text x="821" y="475">本文件版权为易构工作室所有, 未经许可不得擅自给第三方或复制。</text>
      </g>
    </CadSvg>
  );
}

const resultLines = `计算结果如下:
    1）局部紧接承压应力82.50Mpa ⩽ 115.00Mpa（设计许用值） 满足要求;
    2）孔壁抗拉应力101.32Mpa ⩽ 165.00Mpa（设计许用值） 满足要求;
    3）焊缝组合应力42.65Mpa ⩽ 200.00Mpa（设计许用值） 满足要求;
    4）吊盖底板受到的弯曲应力190.53Mpa ⩽ 195.00Mpa（设计许用值） 满足要求;`;

function App() {
  return (
    <Window>
      <GlobalStyle />
      <Header />
      <Toolbar />
      <Body>
        <Sidebar>
          <Tree>
            {tree.map((item, index) => (
              <TreeItem key={item.text} item={item} first={index === 0} />
            ))}
          </Tree>
          <Scroll />
          <HScroll />
        </Sidebar>
        <Main>
          <DocTabs>
            <DocTab>
              吊盖设计
              <button aria-label="关闭">
                <X size={7} strokeWidth={4} />
              </button>
            </DocTab>
          </DocTabs>
          <Panel>
            <SubTabs>
              <SubTab $active>6吊盖设计</SubTab>
              <SubTab>有限元分析结果显示</SubTab>
            </SubTabs>
            <Work>
              <DesignForm />
              <Viewer>
                <ViewerTabs>
                  <SubTab>吊盖示意图</SubTab>
                  <SubTab $active>吊盖实时绘图</SubTab>
                </ViewerTabs>
                <CanvasFrame>
                  <Drawing />
                  <ContextMenu>
                    {menuItems.map(([icon, text]) => (
                      <li key={icon}>
                        <MenuItem $active={icon === "disk"}>
                          <Icon name={icon} size={13} />
                          {text}
                        </MenuItem>
                      </li>
                    ))}
                  </ContextMenu>
                </CanvasFrame>
                <Results>
                  <ResultText>{resultLines}</ResultText>
                  <ResultScroll />
                </Results>
              </Viewer>
            </Work>
          </Panel>
          <StatusBar>
            <span>提示：双击标题，关闭子窗体</span>
            <Caret />
            <StatusIcon />
            <a href="#home">吊装助理</a>
          </StatusBar>
        </Main>
      </Body>
      <Watermark>
        <svg width="40" height="24" viewBox="0 0 40 24" fill="none">
          <g stroke="#999" strokeWidth="4.500">
            <path d="M2 5q0 12 6 17M3 10q5-7 9-1" />
            <circle cx="20" cy="7" r="5" />
            <circle cx="33" cy="7" r="5" />
            <path d="M15 8v9" />
          </g>
          <g stroke="#fff" strokeWidth="3">
            <path d="M2 5q0 12 6 17M3 10q5-7 9-1" />
            <circle cx="20" cy="7" r="5" />
            <circle cx="33" cy="7" r="5" />
            <path d="M15 8v9" />
          </g>
        </svg>
        大数跨境
      </Watermark>
    </Window>
  );
}

export default App;
